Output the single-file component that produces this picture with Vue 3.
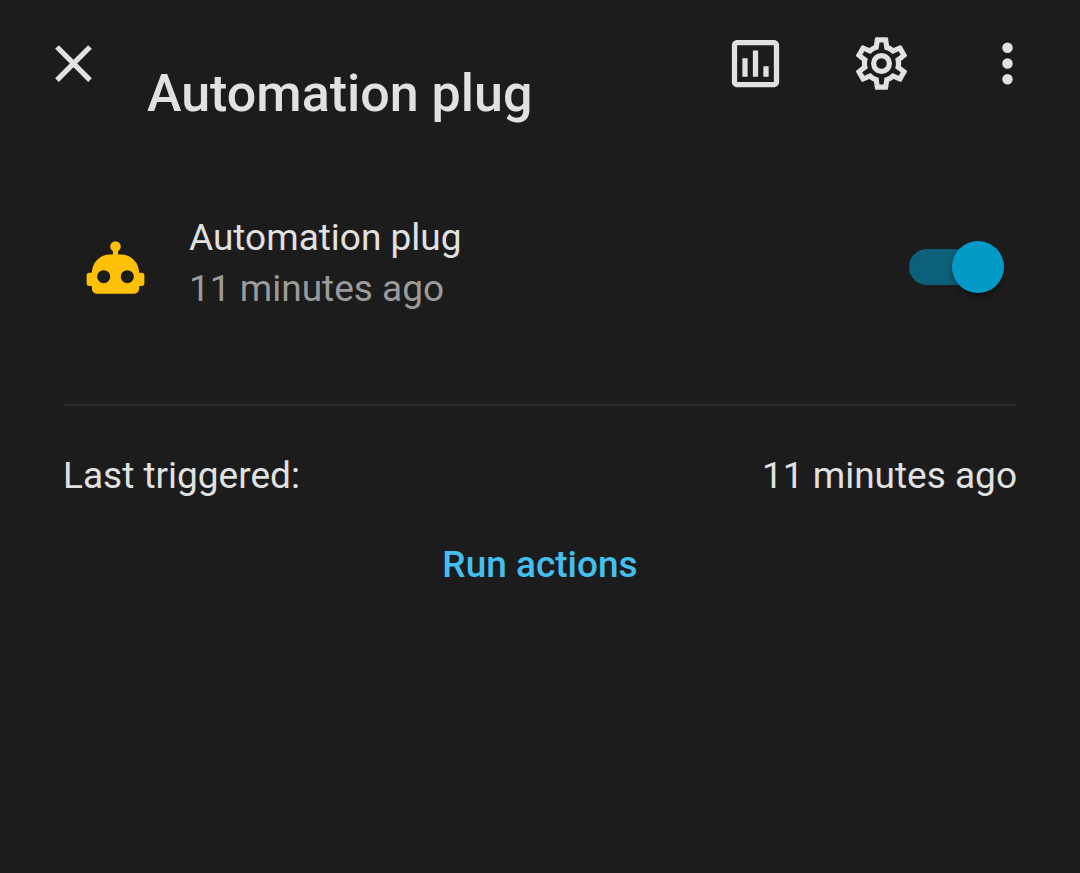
<script setup>
import { ref } from 'vue'

const enabled = ref(true)
const name = 'Automation plug'
const lastTriggered = '11 minutes ago'

const icons = {
  close: 'M19,6.41L17.59,5L12,10.59L6.41,5L5,6.41L10.59,12L5,17.59L6.41,19L12,13.41L17.59,19L19,17.59L13.41,12L19,6.41Z',
  robot: 'M12,2A2,2 0 0,1 14,4C14,4.74 13.6,5.39 13,5.73V7H14A7,7 0 0,1 21,14H22A1,1 0 0,1 23,15V18A1,1 0 0,1 22,19H21V20A2,2 0 0,1 19,22H5A2,2 0 0,1 3,20V19H2A1,1 0 0,1 1,18V15A1,1 0 0,1 2,14H3A7,7 0 0,1 10,7H11V5.73C10.4,5.39 10,4.74 10,4A2,2 0 0,1 12,2M7.5,13A2.5,2.5 0 0,0 5,15.5A2.5,2.5 0 0,0 7.5,18A2.5,2.5 0 0,0 10,15.5A2.5,2.5 0 0,0 7.5,13M16.5,13A2.5,2.5 0 0,0 14,15.5A2.5,2.5 0 0,0 16.5,18A2.5,2.5 0 0,0 19,15.5A2.5,2.5 0 0,0 16.5,13Z'
}

const actions = [
  {
    label: 'History',
    path: 'M9,17H7V10H9V17M13,17H11V7H13V17M17,17H15V13H17V17M19,19H5V5H19V19M19,3H5C3.9,3 3,3.9 3,5V19C3,20.1 3.9,21 5,21H19C20.1,21 21,20.1 21,19V5C21,3.9 20.1,3 19,3Z'
  },
  {
    label: 'Settings',
    path: 'M12,8A4,4 0 0,1 16,12A4,4 0 0,1 12,16A4,4 0 0,1 8,12A4,4 0 0,1 12,8M12,10A2,2 0 0,0 10,12A2,2 0 0,0 12,14A2,2 0 0,0 14,12A2,2 0 0,0 12,10M10,22C9.75,22 9.54,21.82 9.5,21.58L9.13,18.93C8.5,18.68 7.96,18.34 7.44,17.94L4.95,18.95C4.73,19.03 4.46,18.95 4.34,18.73L2.34,15.27C2.21,15.05 2.27,14.78 2.46,14.63L4.57,12.97L4.5,12L4.57,11L2.46,9.37C2.27,9.22 2.21,8.95 2.34,8.73L4.34,5.27C4.46,5.05 4.73,4.96 4.95,5.05L7.44,6.05C7.96,5.66 8.5,5.32 9.13,5.07L9.5,2.42C9.54,2.18 9.75,2 10,2H14C14.25,2 14.46,2.18 14.5,2.42L14.87,5.07C15.5,5.32 16.04,5.66 16.56,6.05L19.05,5.05C19.27,4.96 19.54,5.05 19.66,5.27L21.66,8.73C21.79,8.95 21.73,9.22 21.54,9.37L19.43,11L19.5,12L19.43,13L21.54,14.63C21.73,14.78 21.79,15.05 21.66,15.27L19.66,18.73C19.54,18.95 19.27,19.04 19.05,18.95L16.56,17.95C16.04,18.34 15.5,18.68 14.87,18.93L14.5,21.58C14.46,21.82 14.25,22 14,22H10M11.25,4L10.88,6.61C9.68,6.86 8.62,7.5 7.85,8.39L5.44,7.35L4.69,8.65L6.8,10.2C6.4,11.37 6.4,12.64 6.8,13.8L4.68,15.36L5.43,16.66L7.86,15.62C8.63,16.5 9.68,17.14 10.87,17.38L11.24,20H12.76L13.13,17.39C14.32,17.14 15.37,16.5 16.14,15.62L18.57,16.66L19.32,15.36L17.2,13.81C17.6,12.64 17.6,11.37 17.2,10.2L19.31,8.65L18.56,7.35L16.15,8.39C15.38,7.5 14.32,6.86 13.12,6.62L12.75,4H11.25Z'
  },
  {
    label: 'More options',
    path: 'M12,16A2,2 0 0,1 14,18A2,2 0 0,1 12,20A2,2 0 0,1 10,18A2,2 0 0,1 12,16M12,10A2,2 0 0,1 14,12A2,2 0 0,1 12,14A2,2 0 0,1 10,12A2,2 0 0,1 12,10M12,4A2,2 0 0,1 14,6A2,2 0 0,1 12,8A2,2 0 0,1 10,6A2,2 0 0,1 12,4Z'
  }
]
</script>

<template>
  <main class="dialog">
    <header class="header">
      <button class="icon-button" type="button" aria-label="Close">
        <svg class="icon" viewBox="0 0 24 24" aria-hidden="true"><path :d="icons.close" /></svg>
      </button>
      <h1 class="title">{{ name }}</h1>
      <button
        v-for="action in actions"
        :key="action.label"
        class="icon-button"
        type="button"
        :aria-label="action.label"
      >
        <svg class="icon" viewBox="0 0 24 24" aria-hidden="true"><path :d="action.path" /></svg>
      </button>
    </header>

    <section class="content">
      <div class="entity">
        <span class="badge">
          <svg class="icon" viewBox="0 0 24 24" aria-hidden="true"><path :d="icons.robot" /></svg>
        </span>
        <div class="info">
          <label for="automation-toggle">{{ name }}</label>
          <span class="secondary">{{ lastTriggered }}</span>
        </div>
        <input id="automation-toggle" v-model="enabled" class="switch" type="checkbox" role="switch" />
      </div>

      <hr class="divider" />

      <div class="row">
        <span>Last triggered:</span>
        <span>{{ lastTriggered }}</span>
      </div>

      <div class="actions">
        <button class="run" type="button">Run actions</button>
      </div>
    </section>
  </main>
</template>

<style>
body {
  margin: 0;
  background: #1c1c1c;
}
</style>

<style scoped>
.dialog {
  min-height: 100vh;
  box-sizing: border-box;
  background: #1c1c1c;
  color: #e1e1e1;
  font-family: Roboto, "Liberation Sans", sans-serif;
  font-size: 37px;
  line-height: 51px;
}

.header {
  display: flex;
  align-items: flex-start;
  padding: 0 10px;
}

.icon-button {
  display: flex;
  flex: none;
  align-items: center;
  justify-content: center;
  width: 126px;
  height: 126px;
  padding: 0;
  border: 0;
  background: none;
  color: inherit;
  cursor: pointer;
}

.icon {
  display: block;
  width: 63px;
  height: 63px;
  fill: currentColor;
}

.title {
  flex: 1;
  min-width: 0;
  margin: 0;
  padding: 62px 0 0 11px;
  font-size: 52px;
  font-weight: 500;
  line-height: 64px;
}

.content {
  padding: 86px 63px 0;
}

.entity {
  display: flex;
  align-items: center;
  padding-right: 13px;
}

.badge {
  display: flex;
  flex: none;
  justify-content: center;
  width: 105px;
  color: #ffc107;
}

.info {
  display: flex;
  flex: 1;
  flex-direction: column;
  min-width: 0;
  padding: 0 21px 8px;
}

.secondary {
  color: #9b9b9b;
}

.switch {
  position: relative;
  flex: none;
  width: 95px;
  height: 36px;
  margin: 0;
  border-radius: 18px;
  background: #555555;
  appearance: none;
  cursor: pointer;
}

.switch::before {
  content: "";
  position: absolute;
  top: -8px;
  left: 0;
  width: 52px;
  height: 52px;
  border-radius: 50%;
  background: #b9b9b9;
  box-shadow: 0 3px 6px rgba(0, 0, 0, 0.4);
}

.switch:checked {
  background: #0d6079;
}

.switch:checked::before {
  right: 0;
  left: auto;
  background: #039ac8;
}

.divider {
  height: 2px;
  margin: 82px 0 44px;
  border: 0;
  background: #2b2b2b;
}

.row {
  display: flex;
  justify-content: space-between;
}

.actions {
  display: flex;
  justify-content: center;
  padding-top: 16px;
}

.run {
  height: 94px;
  padding: 0 21px;
  border: 0;
  background: none;
  color: #44bff0;
  font: inherit;
  font-weight: 500;
  cursor: pointer;
}
</style>
